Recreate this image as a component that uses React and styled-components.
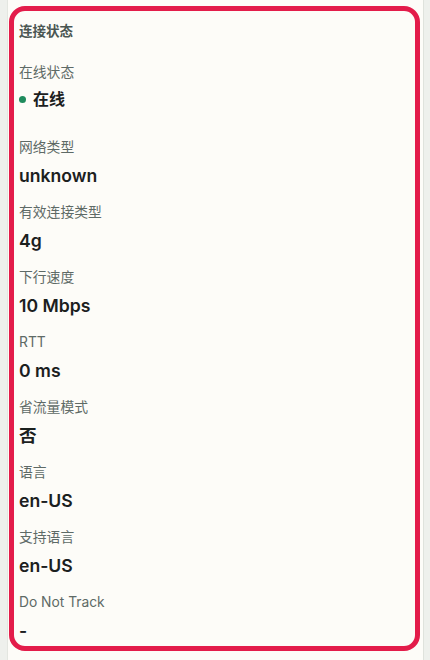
import React from 'react';
import styled, { createGlobalStyle } from 'styled-components';

const GlobalStyle = createGlobalStyle`
html, body {
  margin: 0;
  padding: 0;
  background: #fdfcf8;
}
body {
  font-family: Inter, "Noto Sans CJK SC", sans-serif;
}
`

const Frame = styled.div`
display: flex;
width: 430px;
height: 660px;
overflow: hidden;
`
const Gutter = styled.div`
width: 7px;
flex-shrink: 0;
background: #eef0ec;
border-right: 1px solid #e3e6e0;
`
const Main = styled.div`
flex: 1;
padding: 6px 3px 9px 1px;
`
const RightRail = styled.div`
width: 6px;
flex-shrink: 0;
background: #eef0ec;
border-left: 1px solid #dfe2dc;
`

const Card = styled.section`
height: 100%;
box-sizing: border-box;
border: 5px solid #e31c4a;
border-radius: 16px;
background: #fdfcf8;
padding: 11px 5px 4px;
`
const Title = styled.h3`
margin: 0 0 23px;
font-size: 13.5px;
line-height: 18px;
font-weight: 700;
color: #4a5652;
`
const Field = styled.div`
margin-bottom: ${p => (p.$wide ? '27px' : '15px')};
`
const Label = styled.div`
font-size: 13.8px;
line-height: 18px;
color: #5e6a66;
`
const Value = styled.div`
display: flex;
align-items: center;
margin-top: ${p => (p.$tight ? '6px' : '8px')};
font-size: ${p => (p.$cjk ? '16px' : '17.6px')};
line-height: 24px;
font-weight: 600;
color: #1b201e;
`
const Dot = styled.span`
width: 7px;
height: 7px;
border-radius: 50%;
background: #1f8b5d;
margin-right: 7px;
`

const campos = [
  ['网络类型', 'unknown'],
  ['有效连接类型', '4g'],
  ['下行速度', '10 Mbps'],
  ['RTT', '0 ms'],
  ['省流量模式', '否'],
  ['语言', 'en-US'],
  ['支持语言', 'en-US'],
  ['Do Not Track', '-'],
]

export default function App() {
  return (
    <Frame>
      <GlobalStyle />
      <Gutter />
      <Main>
        <Card>
          <Title>连接状态</Title>
          <Field $wide>
            <Label>在线状态</Label>
            <Value $cjk $tight>
              <Dot />
              在线
            </Value>
          </Field>
          {campos.map(([label, valor]) => (
            <Field key={label}>
              <Label>{label}</Label>
              <Value>{valor}</Value>
            </Field>
          ))}
        </Card>
      </Main>
      <RightRail />
    </Frame>
  )
}
